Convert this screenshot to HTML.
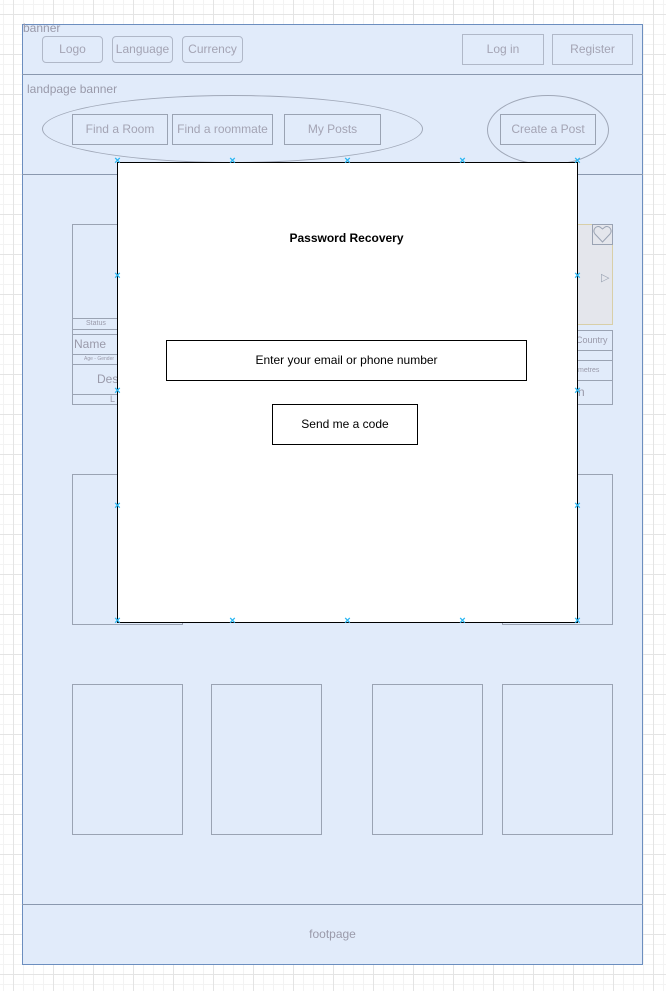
<!DOCTYPE html>
<html><head><meta charset="utf-8"><style>
body{margin:0;width:666px;height:991px;position:relative;overflow:hidden;font-family:"Liberation Sans",sans-serif;
background-color:#fff;
background-image:linear-gradient(#e4e4e4 1px,transparent 1px),linear-gradient(90deg,#e4e4e4 1px,transparent 1px),linear-gradient(#f3f3f3 1px,transparent 1px),linear-gradient(90deg,#f3f3f3 1px,transparent 1px);
background-size:40px 40px,40px 40px,10px 10px,10px 10px;background-position:13px 14px,13px 14px,3px 4px,3px 4px;}
.a{position:absolute;box-sizing:border-box}
.fr{background:#e1ebfa;border:1px solid #6c8ebf}
.hl{height:1px;background:#8a98ae;left:22px;width:621px}
.b{border:1px solid #9aa3b3;color:#a4a4b4;font-size:12px;display:flex;align-items:center;justify-content:center;padding-bottom:2px}
.r{border-radius:4px;border-color:#b0b8c8}
.t{color:#9a9aaa;font-size:12px}
.card{border:1px solid #9aa3b3}
.x{position:absolute;color:#29b6f2;font-size:11px;font-weight:bold;line-height:9px;width:9px;text-align:center;margin:-5px 0 0 -4px}
</style></head><body>
<div class="a fr" style="left:22px;top:24px;width:621px;height:941px"></div>
<div class="a t" style="left:23px;top:21px">banner</div>
<div class="a b r" style="left:42px;top:36px;width:61px;height:27px">Logo</div>
<div class="a b r" style="left:112px;top:36px;width:61px;height:27px">Language</div>
<div class="a b r" style="left:182px;top:36px;width:61px;height:27px">Currency</div>
<div class="a b" style="left:462px;top:34px;width:82px;height:31px;border-color:#b0b8c8">Log in</div>
<div class="a b" style="left:552px;top:34px;width:81px;height:31px;border-color:#b0b8c8">Register</div>
<div class="a hl" style="top:74px"></div>
<div class="a t" style="left:27px;top:82px">landpage banner</div>
<div class="a" style="left:42px;top:95px;width:381px;height:68px;border:1px solid #a0a8b8;border-radius:50%"></div>
<div class="a" style="left:487px;top:95px;width:122px;height:70px;border:1px solid #a0a8b8;border-radius:50%"></div>
<div class="a b" style="left:72px;top:114px;width:96px;height:31px">Find a Room</div>
<div class="a b" style="left:172px;top:114px;width:101px;height:31px">Find a roommate</div>
<div class="a b" style="left:284px;top:114px;width:97px;height:31px">My Posts</div>
<div class="a b" style="left:500px;top:114px;width:96px;height:31px">Create a Post</div>
<div class="a hl" style="top:174px"></div>
<div class="a hl" style="top:904px"></div>
<div class="a t" style="left:22px;top:927px;width:621px;text-align:center">footpage</div>
<div class="a card" style="left:72px;top:224px;width:50px;height:181px"></div>
<div class="a" style="left:72px;top:318px;width:50px;height:1px;background:#9aa3b3"></div>
<div class="a" style="left:72px;top:329px;width:50px;height:1px;background:#9aa3b3"></div>
<div class="a" style="left:72px;top:334px;width:50px;height:1px;background:#9aa3b3"></div>
<div class="a" style="left:72px;top:354px;width:50px;height:1px;background:#9aa3b3"></div>
<div class="a" style="left:72px;top:364px;width:50px;height:1px;background:#9aa3b3"></div>
<div class="a" style="left:72px;top:394px;width:50px;height:1px;background:#9aa3b3"></div>
<div class="a t" style="left:86px;top:320px;font-size:7px">Status</div>
<div class="a t" style="left:74px;top:337px;font-size:12px">Name</div>
<div class="a t" style="left:84px;top:356px;font-size:5px">Age - Gender</div>
<div class="a t" style="left:97px;top:372px">Des</div>
<div class="a t" style="left:110px;top:394px;font-size:9px">L</div>
<div class="a" style="left:575px;top:224px;width:38px;height:101px;background:#e4e6ec;border:1px solid #d8cfa8"></div>
<div class="a" style="left:592px;top:224px;width:21px;height:21px;border:1px solid #9aa3b3"><svg width="19" height="19" viewBox="0 0 19 19"><path d="M9.5 17 L2 9 C-1 5 3 0 7 2 L9.5 4 L12 2 C16 0 20 5 17 9 Z" fill="none" stroke="#9aa3b3"/></svg></div>
<div class="a" style="left:601px;top:271px;color:#9aa3b3;font-size:11px">▷</div>
<div class="a card" style="left:575px;top:330px;width:38px;height:75px"></div>
<div class="a" style="left:575px;top:350px;width:38px;height:1px;background:#9aa3b3"></div>
<div class="a" style="left:575px;top:360px;width:38px;height:1px;background:#9aa3b3"></div>
<div class="a" style="left:575px;top:380px;width:38px;height:1px;background:#9aa3b3"></div>
<div class="a t" style="left:576px;top:335px;font-size:9px">Country</div>
<div class="a t" style="left:578px;top:367px;font-size:7px">metres</div>
<div class="a t" style="left:578px;top:385px">n</div>
<div class="a card" style="left:72px;top:474px;width:111px;height:151px"></div>
<div class="a card" style="left:502px;top:474px;width:111px;height:151px"></div>
<div class="a card" style="left:72px;top:684px;width:111px;height:151px"></div>
<div class="a card" style="left:211px;top:684px;width:111px;height:151px"></div>
<div class="a card" style="left:372px;top:684px;width:111px;height:151px"></div>
<div class="a card" style="left:502px;top:684px;width:111px;height:151px"></div>
<div class="a" style="left:117px;top:162px;width:461px;height:461px;background:#fff;border:1px solid #000"></div>
<div class="a" style="left:116px;top:231px;width:461px;text-align:center;font-size:12px;font-weight:bold">Password Recovery</div>
<div class="a" style="left:166px;top:340px;width:361px;height:41px;border:1px solid #000;font-size:12px;display:flex;align-items:center;justify-content:center;padding-bottom:2px">Enter your email or phone number</div>
<div class="a" style="left:272px;top:404px;width:146px;height:41px;border:1px solid #000;font-size:12px;display:flex;align-items:center;justify-content:center;padding-bottom:2px">Send me a code</div>
<span class="x" style="left:117px;top:162px">×</span><span class="x" style="left:232px;top:162px">×</span><span class="x" style="left:347px;top:162px">×</span><span class="x" style="left:462px;top:162px">×</span><span class="x" style="left:577px;top:162px">×</span>
<span class="x" style="left:117px;top:277px">×</span><span class="x" style="left:577px;top:277px">×</span>
<span class="x" style="left:117px;top:392px">×</span><span class="x" style="left:577px;top:392px">×</span>
<span class="x" style="left:117px;top:507px">×</span><span class="x" style="left:577px;top:507px">×</span>
<span class="x" style="left:117px;top:622px">×</span><span class="x" style="left:232px;top:622px">×</span><span class="x" style="left:347px;top:622px">×</span><span class="x" style="left:462px;top:622px">×</span><span class="x" style="left:577px;top:622px">×</span>
</body></html>
